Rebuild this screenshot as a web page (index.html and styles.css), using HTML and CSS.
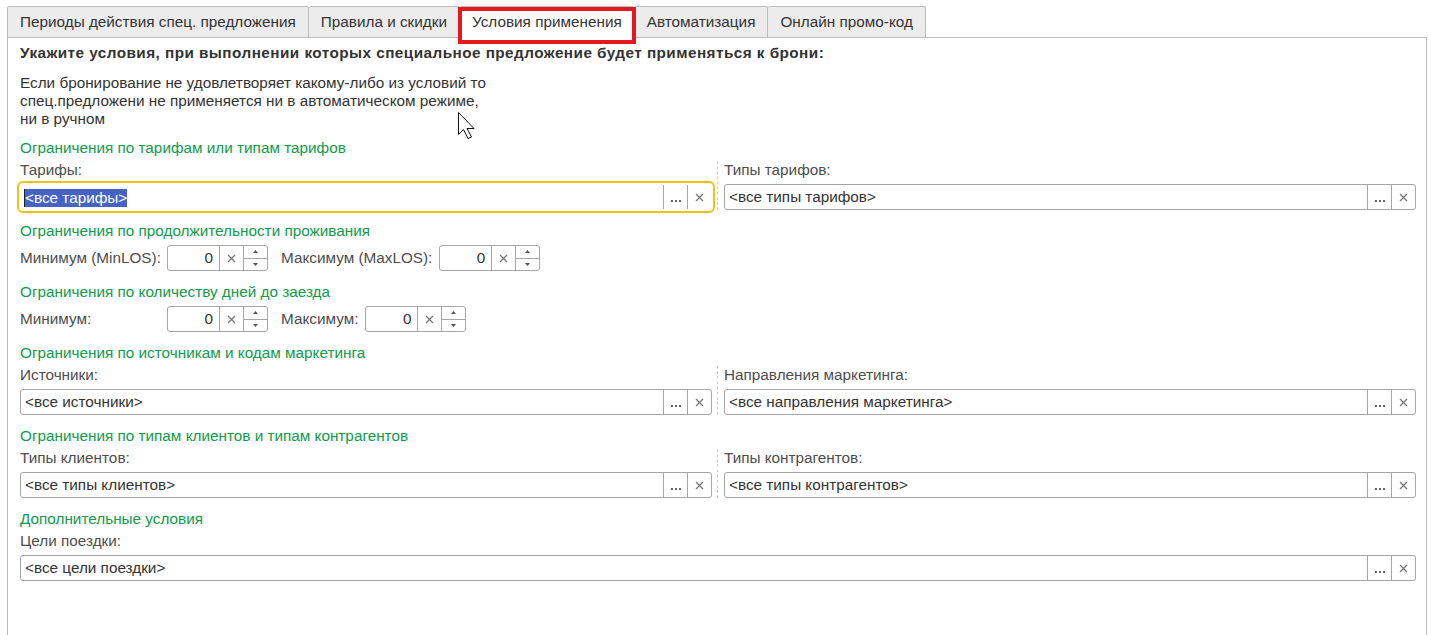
FILE: index.html
```html
<!DOCTYPE html>
<html lang="ru">
<head>
    <meta charset="utf-8" />
    <title>Условия применения</title>
    <link rel="stylesheet" href="styles.css">
</head>
<body>
    <div class="page">
        <div class="tabs">
            <div class="tab">Периоды действия спец. предложения</div>
            <div class="tab">Правила и скидки</div>
            <div class="tab active marked">Условия применения</div>
            <div class="tab">Автоматизация</div>
            <div class="tab">Онлайн промо-код</div>
        </div>

        <div class="panel">
            <div class="title">Укажите условия, при выполнении которых специальное предложение будет применяться к брони:</div>
            <p class="note">
                Если бронирование не удовлетворяет какому-либо из условий то<br>
                спец.предложени не применяется ни в автоматическом режиме,<br>
                ни в ручном
            </p>

            <!-- tariffs -->
            <div class="group">
                <div class="group-title">Ограничения по тарифам или типам тарифов</div>
                <div class="cols">
                    <div class="col">
                        <div class="label">Тарифы:</div>
                        <div class="field focused">
                            <div class="field-value"><span class="selected">&lt;все тарифы&gt;</span></div>
                            <div class="field-btn dots"><svg width="10" height="2" viewBox="0 0 10 2"><rect x="0" y="0" width="2" height="2" /><rect x="4" y="0" width="2" height="2" /><rect x="8" y="0" width="2" height="2" /></svg></div>
                            <div class="field-btn clear"><svg width="9" height="9" viewBox="0 0 9 9"><path d="M1 1L8 8M8 1L1 8" /></svg></div>
                        </div>
                    </div>
                    <div class="col col-right">
                        <div class="label">Типы тарифов:</div>
                        <div class="field">
                            <div class="field-value">&lt;все типы тарифов&gt;</div>
                            <div class="field-btn dots"><svg width="10" height="2" viewBox="0 0 10 2"><rect x="0" y="0" width="2" height="2" /><rect x="4" y="0" width="2" height="2" /><rect x="8" y="0" width="2" height="2" /></svg></div>
                            <div class="field-btn clear"><svg width="9" height="9" viewBox="0 0 9 9"><path d="M1 1L8 8M8 1L1 8" /></svg></div>
                        </div>
                    </div>
                </div>
            </div>

            <!-- length of stay -->
            <div class="group">
                <div class="group-title tight">Ограничения по продолжительности проживания</div>
                <div class="num-row">
                    <div class="num-label first">Минимум (MinLOS):</div>
                    <div class="num">
                        <div class="num-value">0</div>
                        <div class="field-btn clear"><svg width="9" height="9" viewBox="0 0 9 9"><path d="M1 1L8 8M8 1L1 8" /></svg></div>
                        <div class="spin">
                            <div class="spin-half"><svg width="5" height="3" viewBox="0 0 5 3"><path d="M2.5 0L5 3H0Z" /></svg></div>
                            <div class="spin-half down"><svg width="5" height="3" viewBox="0 0 5 3"><path d="M0 0H5L2.5 3Z" /></svg></div>
                        </div>
                    </div>
                    <div class="num-label second">Максимум (MaxLOS):</div>
                    <div class="num">
                        <div class="num-value">0</div>
                        <div class="field-btn clear"><svg width="9" height="9" viewBox="0 0 9 9"><path d="M1 1L8 8M8 1L1 8" /></svg></div>
                        <div class="spin">
                            <div class="spin-half"><svg width="5" height="3" viewBox="0 0 5 3"><path d="M2.5 0L5 3H0Z" /></svg></div>
                            <div class="spin-half down"><svg width="5" height="3" viewBox="0 0 5 3"><path d="M0 0H5L2.5 3Z" /></svg></div>
                        </div>
                    </div>
                </div>
            </div>

            <!-- days before arrival -->
            <div class="group">
                <div class="group-title tight">Ограничения по количеству дней до заезда</div>
                <div class="num-row">
                    <div class="num-label first">Минимум:</div>
                    <div class="num">
                        <div class="num-value">0</div>
                        <div class="field-btn clear"><svg width="9" height="9" viewBox="0 0 9 9"><path d="M1 1L8 8M8 1L1 8" /></svg></div>
                        <div class="spin">
                            <div class="spin-half"><svg width="5" height="3" viewBox="0 0 5 3"><path d="M2.5 0L5 3H0Z" /></svg></div>
                            <div class="spin-half down"><svg width="5" height="3" viewBox="0 0 5 3"><path d="M0 0H5L2.5 3Z" /></svg></div>
                        </div>
                    </div>
                    <div class="num-label second">Максимум:</div>
                    <div class="num">
                        <div class="num-value">0</div>
                        <div class="field-btn clear"><svg width="9" height="9" viewBox="0 0 9 9"><path d="M1 1L8 8M8 1L1 8" /></svg></div>
                        <div class="spin">
                            <div class="spin-half"><svg width="5" height="3" viewBox="0 0 5 3"><path d="M2.5 0L5 3H0Z" /></svg></div>
                            <div class="spin-half down"><svg width="5" height="3" viewBox="0 0 5 3"><path d="M0 0H5L2.5 3Z" /></svg></div>
                        </div>
                    </div>
                </div>
            </div>

            <!-- sources and marketing -->
            <div class="group">
                <div class="group-title">Ограничения по источникам и кодам маркетинга</div>
                <div class="cols">
                    <div class="col">
                        <div class="label">Источники:</div>
                        <div class="field">
                            <div class="field-value">&lt;все источники&gt;</div>
                            <div class="field-btn dots"><svg width="10" height="2" viewBox="0 0 10 2"><rect x="0" y="0" width="2" height="2" /><rect x="4" y="0" width="2" height="2" /><rect x="8" y="0" width="2" height="2" /></svg></div>
                            <div class="field-btn clear"><svg width="9" height="9" viewBox="0 0 9 9"><path d="M1 1L8 8M8 1L1 8" /></svg></div>
                        </div>
                    </div>
                    <div class="col col-right">
                        <div class="label">Направления маркетинга:</div>
                        <div class="field">
                            <div class="field-value">&lt;все направления маркетинга&gt;</div>
                            <div class="field-btn dots"><svg width="10" height="2" viewBox="0 0 10 2"><rect x="0" y="0" width="2" height="2" /><rect x="4" y="0" width="2" height="2" /><rect x="8" y="0" width="2" height="2" /></svg></div>
                            <div class="field-btn clear"><svg width="9" height="9" viewBox="0 0 9 9"><path d="M1 1L8 8M8 1L1 8" /></svg></div>
                        </div>
                    </div>
                </div>
            </div>

            <!-- client types -->
            <div class="group">
                <div class="group-title">Ограничения по типам клиентов и типам контрагентов</div>
                <div class="cols">
                    <div class="col">
                        <div class="label">Типы клиентов:</div>
                        <div class="field">
                            <div class="field-value">&lt;все типы клиентов&gt;</div>
                            <div class="field-btn dots"><svg width="10" height="2" viewBox="0 0 10 2"><rect x="0" y="0" width="2" height="2" /><rect x="4" y="0" width="2" height="2" /><rect x="8" y="0" width="2" height="2" /></svg></div>
                            <div class="field-btn clear"><svg width="9" height="9" viewBox="0 0 9 9"><path d="M1 1L8 8M8 1L1 8" /></svg></div>
                        </div>
                    </div>
                    <div class="col col-right">
                        <div class="label">Типы контрагентов:</div>
                        <div class="field">
                            <div class="field-value">&lt;все типы контрагентов&gt;</div>
                            <div class="field-btn dots"><svg width="10" height="2" viewBox="0 0 10 2"><rect x="0" y="0" width="2" height="2" /><rect x="4" y="0" width="2" height="2" /><rect x="8" y="0" width="2" height="2" /></svg></div>
                            <div class="field-btn clear"><svg width="9" height="9" viewBox="0 0 9 9"><path d="M1 1L8 8M8 1L1 8" /></svg></div>
                        </div>
                    </div>
                </div>
            </div>

            <!-- extra -->
            <div class="group">
                <div class="group-title">Дополнительные условия</div>
                <div class="label">Цели поездки:</div>
                <div class="field">
                    <div class="field-value">&lt;все цели поездки&gt;</div>
                    <div class="field-btn dots"><svg width="10" height="2" viewBox="0 0 10 2"><rect x="0" y="0" width="2" height="2" /><rect x="4" y="0" width="2" height="2" /><rect x="8" y="0" width="2" height="2" /></svg></div>
                    <div class="field-btn clear"><svg width="9" height="9" viewBox="0 0 9 9"><path d="M1 1L8 8M8 1L1 8" /></svg></div>
                </div>
            </div>
        </div>

        <!-- mouse pointer -->
        <svg class="pointer" width="20" height="28" viewBox="0 0 20 28">
            <path d="M0.5 0.5V22.5L5.5 17.5L10 26.5L13.5 25L9 16.5H16Z" />
        </svg>
    </div>
</body>
</html>
```

FILE: styles.css
```css
body {
    margin: 0;
    font-family: "Liberation Sans", Arial, sans-serif;
    font-size: 15.3px;
    line-height: 18px;
    color: #333;
    background: #fff;
}

.page {
    position: relative;
    padding: 6px 4px 0 7px;
}

/* tabs */
.tabs {
    display: flex;
    position: relative;
    z-index: 1;
}

.tab {
    padding: 6px 12px;
    background: #ececec;
    border: 1px solid #bcbcbc;
    border-left: none;
    border-bottom: none;
    border-radius: 2px 2px 0 0;
    white-space: nowrap;
    color: #333;
}

    .tab:first-child {
        border-left: 1px solid #bcbcbc;
    }

    .tab.active {
        position: relative;
        background: #fff;
        padding-bottom: 7px;
        margin-bottom: -1px;
    }

    .tab.marked::after {
        content: "";
        position: absolute;
        left: -2px;
        top: 0;
        right: -2px;
        bottom: -6px;
        border: 4px solid #e3191f;
    }

/* main panel */
.panel {
    border: 1px solid #bcbcbc;
    border-bottom: none;
    padding: 6px 10px 0 12px;
    min-height: 620px;
}

.title {
    font-weight: bold;
    letter-spacing: 0.45px;
}

.note {
    margin: 12px 0 11px 0;
}

.group {
    margin-bottom: 12px;
}

.group-title {
    color: #119a4a;
    margin-bottom: 4px;
}

    .group-title.tight {
        margin-bottom: 5px;
    }

.label {
    color: #4d4d4d;
    margin-bottom: 5px;
}

.cols {
    display: grid;
    grid-template-columns: 692px 1fr;
    column-gap: 5px;
}

.col-right {
    border-left: 1px dashed #d0d0d0;
    padding-left: 6px;
}

/* input with select/clear buttons */
.field {
    display: flex;
    height: 26px;
    box-sizing: border-box;
    border: 1px solid #a6a6a6;
    border-radius: 3px;
    background: #fff;
}

    .field.focused {
        border-color: #fff;
        outline: 2px solid #f4c312;
        outline-offset: 1px;
    }

.field-value {
    flex: 1;
    padding: 0 4px;
    line-height: 24px;
    white-space: nowrap;
    overflow: hidden;
}

.selected {
    display: inline-block;
    line-height: 18px;
    vertical-align: middle;
    background: #4563c4;
    color: #fff;
    border-left: 1px solid #222;
    margin-left: -1px;
}

.field-btn {
    width: 24px;
    box-sizing: border-box;
    border-left: 1px solid #a6a6a6;
    display: flex;
    align-items: center;
    justify-content: center;
}

    .field-btn.dots {
        align-items: flex-end;
        padding-bottom: 7px;
    }

    .field-btn.dots rect {
        fill: #666;
    }

    .field-btn svg path {
        stroke: #777;
        stroke-width: 1.3;
        fill: none;
    }

/* numeric input */
.num-row {
    display: flex;
    align-items: center;
    gap: 7px;
}

.num-label {
    color: #4d4d4d;
    white-space: nowrap;
}

    .num-label.first {
        width: 140px;
    }

    .num-label.second {
        margin-left: 6px;
    }

.num {
    display: flex;
    width: 101px;
    height: 26px;
    box-sizing: border-box;
    border: 1px solid #a6a6a6;
    border-radius: 3px;
}

.num-value {
    flex: 1;
    text-align: right;
    padding-right: 6px;
    line-height: 24px;
}

.spin {
    width: 24px;
    box-sizing: border-box;
    border-left: 1px solid #a6a6a6;
    display: flex;
    flex-direction: column;
}

.spin-half {
    flex: 1;
    display: flex;
    align-items: center;
    justify-content: center;
}

    .spin-half.down {
        border-top: 1px solid #a6a6a6;
    }

    .spin-half svg path {
        fill: #555;
    }

.pointer {
    position: absolute;
    left: 458px;
    top: 112px;
    z-index: 2;
}

    .pointer path {
        fill: #fff;
        stroke: #111;
        stroke-width: 1;
        stroke-linejoin: miter;
    }
```
